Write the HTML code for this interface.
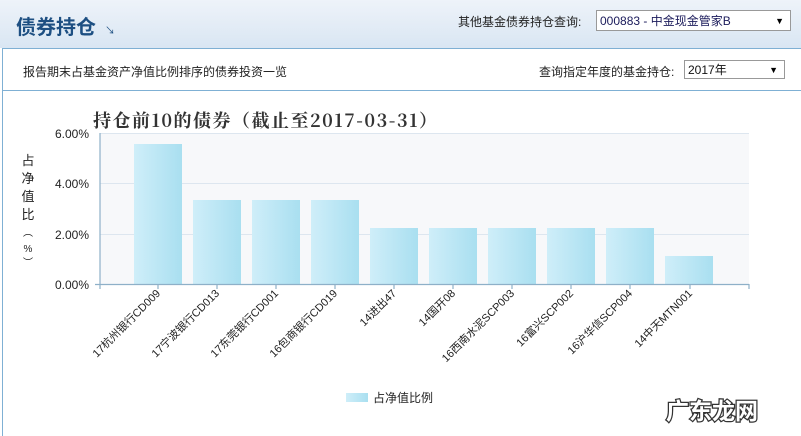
<!DOCTYPE html>
<html><head><meta charset="utf-8"><style>
body{margin:0;width:801px;height:435px;overflow:hidden;background:#fff;font-family:"Liberation Sans","Noto Sans CJK SC",sans-serif;position:relative}
.hdr{position:absolute;left:0;top:0;width:801px;height:48px;background:linear-gradient(#eef3f9,#d9e6f3)}
.ttl{position:absolute;left:16px;top:11px;font-size:20px;font-weight:bold;color:#1d4f82}
.arr{position:absolute;left:105px;top:22px;font-size:10px;color:#1d4f82}
.box{position:absolute;left:2px;top:48px;width:799px;height:387px;border-top:1px solid #7fb0d4;border-left:1px solid #7fb0d4}
.line2{position:absolute;left:2px;top:90px;width:799px;border-top:1px solid #7fb0d4}
.t{position:absolute;font-size:12px;color:#222;white-space:nowrap}
.sel{position:absolute;border:1px solid #999;background:#fff;font-size:12px;color:#111;height:19px;line-height:19px;padding-left:3px;box-sizing:border-box}
.sel i{position:absolute;right:6px;top:0;font-style:normal;font-size:9px}
</style></head><body>
<div class="hdr"></div>
<div class="ttl">债券持仓</div>
<div class="arr">↘</div>
<div class="t" style="left:458px;top:13px">其他基金债券持仓查询:</div>
<div class="sel" style="left:596px;top:10px;width:195px;height:21px;line-height:20px;color:#1a1a5a">000883 - 中金现金管家B<i style="color:#000">▼</i></div>
<div class="box"></div>
<div class="line2"></div>
<div class="t" style="left:23px;top:63px">报告期末占基金资产净值比例排序的债券投资一览</div>
<div class="t" style="left:539px;top:63px">查询指定年度的基金持仓:</div>
<div class="sel" style="left:684px;top:60px;width:101px">2017年<i style="color:#000">▼</i></div>
<svg style="position:absolute;left:0;top:0" width="801" height="435" xmlns="http://www.w3.org/2000/svg">
<defs><linearGradient id="g" x1="0" x2="1"><stop offset="0" stop-color="#cfeef9"/><stop offset="1" stop-color="#a9dff0"/></linearGradient></defs>
<text x="93" y="127" font-family="Noto Serif CJK SC,serif" font-size="18" font-weight="bold" fill="#333" textLength="344">持仓前10的债券（截止至2017-03-31）</text>
<rect x="100" y="133" width="649" height="151" fill="#f7f8fa"/>
<g stroke="#dde6ef" stroke-width="1"><line x1="100" y1="133.5" x2="749" y2="133.5"/><line x1="100" y1="183.5" x2="749" y2="183.5"/><line x1="100" y1="234.5" x2="749" y2="234.5"/></g>
<g fill="url(#g)">
<rect x="134" y="144" width="48" height="140"/>
<rect x="193" y="200" width="48" height="84"/>
<rect x="252" y="200" width="48" height="84"/>
<rect x="311" y="200" width="48" height="84"/>
<rect x="370" y="228" width="48" height="56"/>
<rect x="429" y="228" width="48" height="56"/>
<rect x="488" y="228" width="48" height="56"/>
<rect x="547" y="228" width="48" height="56"/>
<rect x="606" y="228" width="48" height="56"/>
<rect x="665" y="256" width="48" height="28"/>
</g>
<g stroke="#8eb0c8" stroke-width="1.2"><line x1="100" y1="133" x2="100" y2="289"/><line x1="95" y1="284.5" x2="749" y2="284.5"/>
<line x1="158" y1="284" x2="158" y2="289"/><line x1="217" y1="284" x2="217" y2="289"/><line x1="276" y1="284" x2="276" y2="289"/><line x1="335" y1="284" x2="335" y2="289"/><line x1="394" y1="284" x2="394" y2="289"/><line x1="453" y1="284" x2="453" y2="289"/><line x1="512" y1="284" x2="512" y2="289"/><line x1="571" y1="284" x2="571" y2="289"/><line x1="630" y1="284" x2="630" y2="289"/><line x1="690" y1="284" x2="690" y2="289"/><line x1="749" y1="284" x2="749" y2="289"/></g>
<g font-size="12" fill="#222" text-anchor="end" font-family="Liberation Sans,sans-serif">
<text x="89" y="138">6.00%</text><text x="89" y="188">4.00%</text><text x="89" y="239">2.00%</text><text x="89" y="289">0.00%</text></g>
<g font-size="13" fill="#222" text-anchor="middle" font-family="Liberation Sans,Noto Sans CJK SC,sans-serif">
<text x="28" y="165">占</text><text x="28" y="183">净</text><text x="28" y="201">值</text><text x="28" y="219">比</text>
<text x="28" y="236" font-size="10">︵</text><text x="28" y="252" font-size="10">%</text><text x="28" y="266" font-size="10">︶</text></g>
<g font-size="11" fill="#222" text-anchor="end" font-family="Liberation Sans,Noto Sans CJK SC,sans-serif">
<text transform="translate(161,294) rotate(-45)">17杭州银行CD009</text>
<text transform="translate(220,294) rotate(-45)">17宁波银行CD013</text>
<text transform="translate(279,294) rotate(-45)">17东莞银行CD001</text>
<text transform="translate(338,294) rotate(-45)">16包商银行CD019</text>
<text transform="translate(397,294) rotate(-45)">14进出47</text>
<text transform="translate(456,294) rotate(-45)">14国开08</text>
<text transform="translate(515,294) rotate(-45)">16西南水泥SCP003</text>
<text transform="translate(574,294) rotate(-45)">16富兴SCP002</text>
<text transform="translate(633,294) rotate(-45)">16沪华信SCP004</text>
<text transform="translate(693,294) rotate(-45)">14中天MTN001</text>
</g>
<rect x="346" y="393" width="22" height="9" fill="url(#g)"/>
<text x="373" y="402" font-size="12" fill="#222" font-family="Liberation Sans,Noto Sans CJK SC,sans-serif">占净值比例</text>
<text x="666" y="419" font-size="23" font-weight="bold" fill="#fff" stroke="#333" stroke-width="2.5" paint-order="stroke" font-family="Noto Sans CJK SC,sans-serif">广东龙网</text>
</svg>
</body></html>
